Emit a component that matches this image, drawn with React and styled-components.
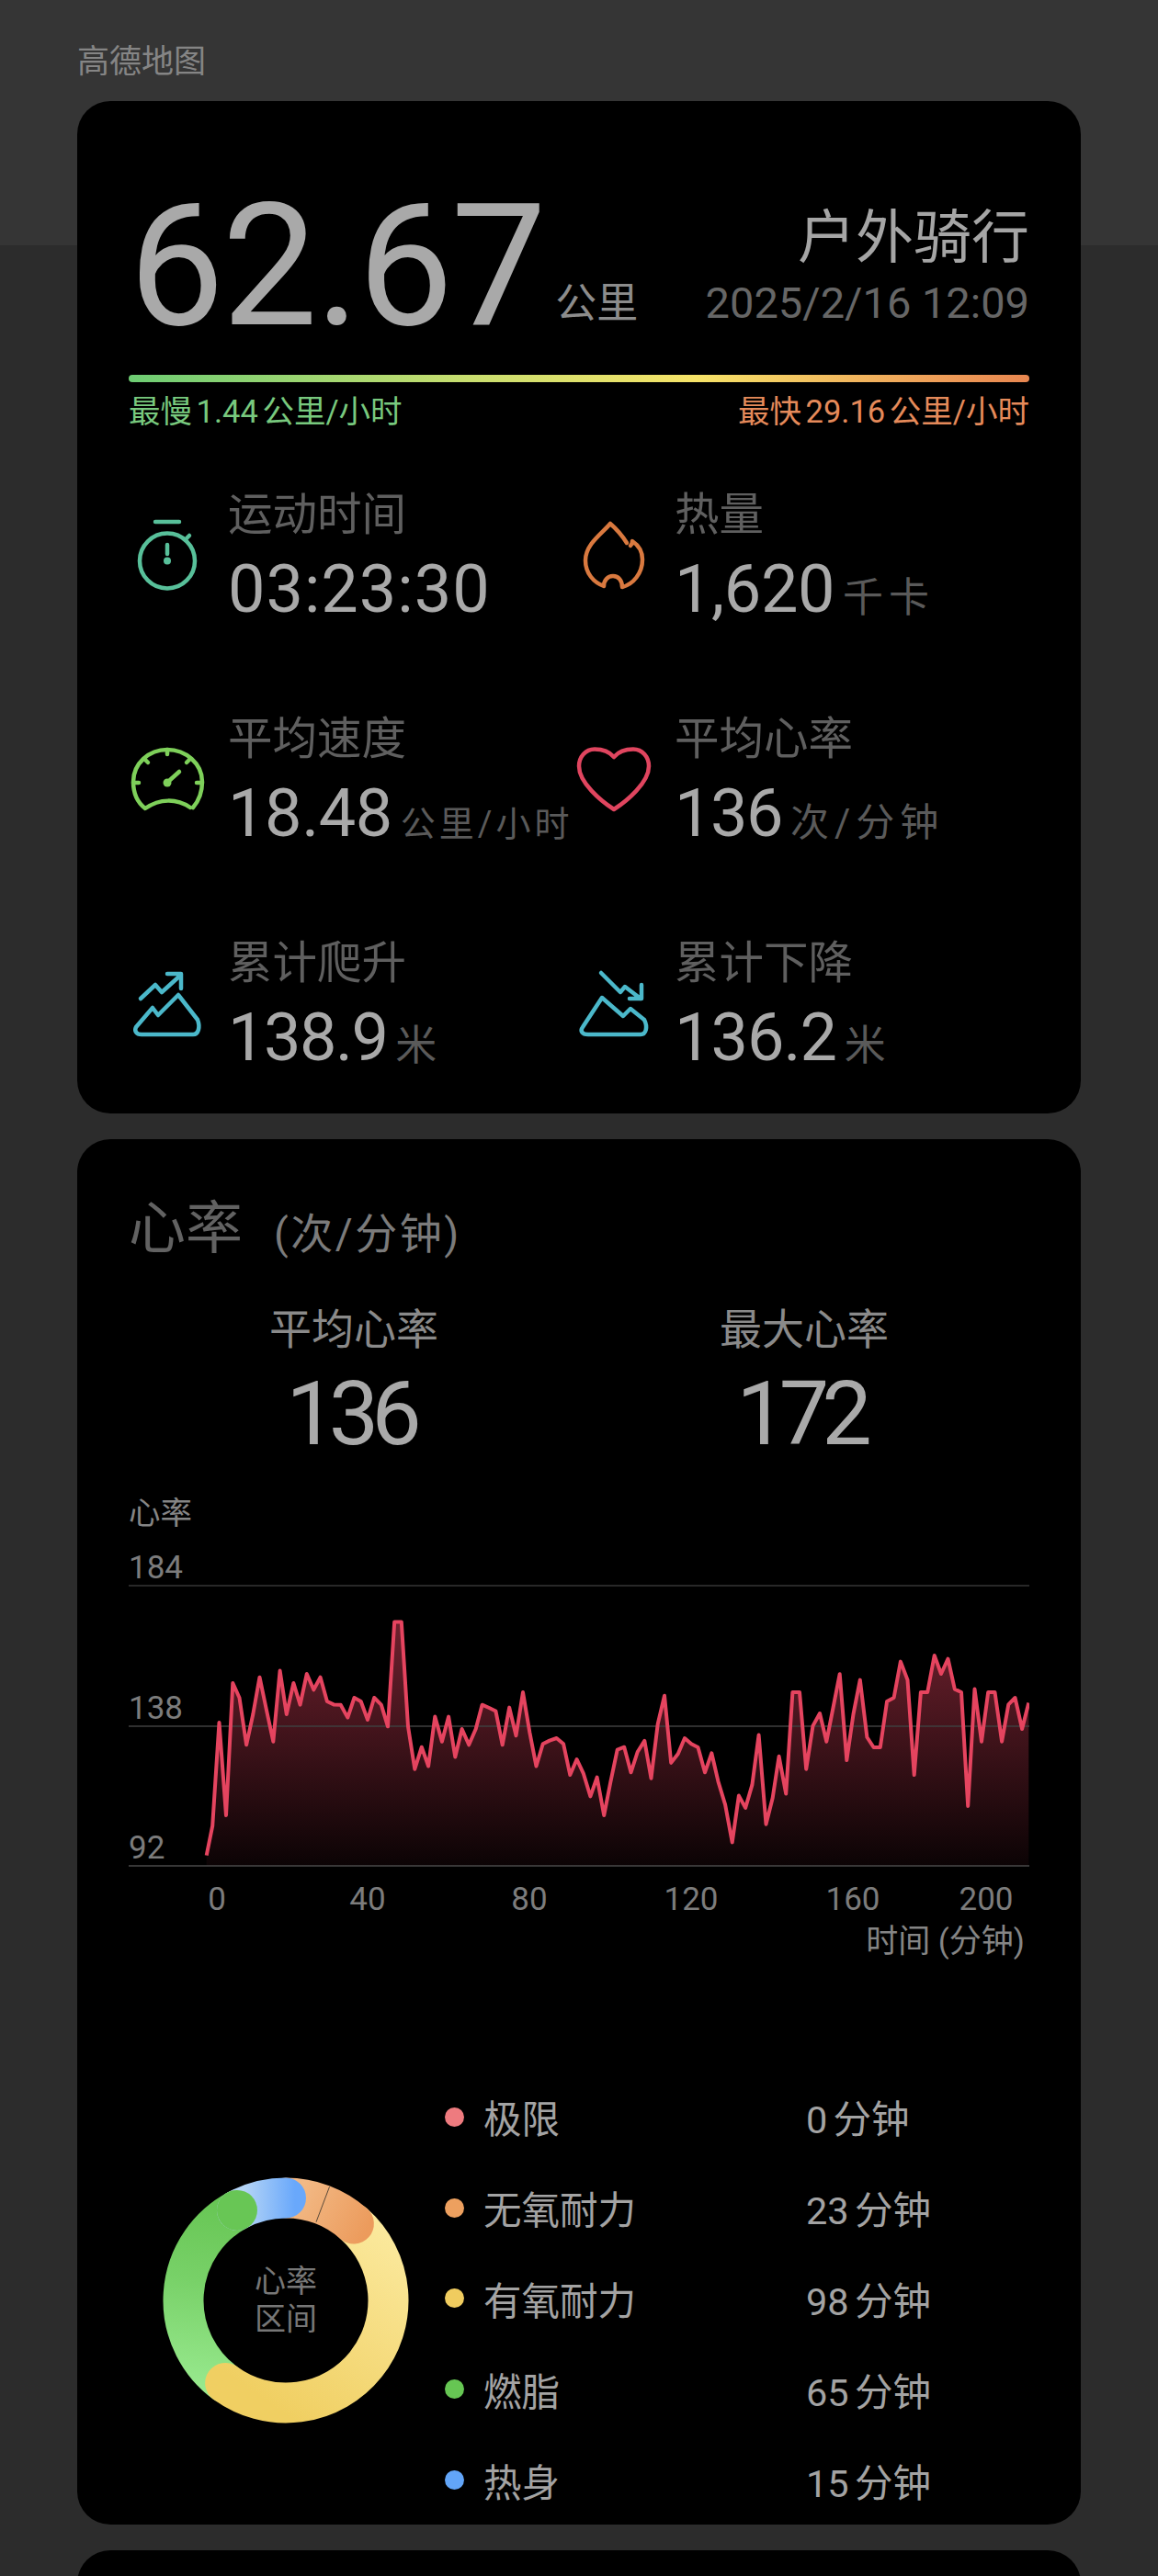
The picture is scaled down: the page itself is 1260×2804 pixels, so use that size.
import React from "react";
import styled, { createGlobalStyle } from "styled-components";

const sans = `Roboto, "Noto Sans CJK SC", sans-serif`;

const GlobalStyle = createGlobalStyle`
  html, body {
    margin: 0;
    padding: 0;
    height: 2804px;
    overflow: hidden;
    background: linear-gradient(#353535 267px, #2c2c2c 267px);
    font-family: ${sans};
  }
`;

const Page = styled.div`
  width: 1260px;
  height: 2804px;
  overflow: hidden;
  padding: 0 84px;
  box-sizing: border-box;
`;

const AppName = styled.div`
  height: 110px;
  padding-top: 47px;
  box-sizing: border-box;
  font-size: 35px;
  line-height: 42px;
  color: #858585;
`;

const Card = styled.section`
  background: #000;
  border-radius: 36px;
  padding: 0 56px;
  box-sizing: border-box;
  height: ${(props) => props.$height}px;
  margin-bottom: 28px;
`;

const SummaryRow = styled.div`
  display: flex;
  justify-content: space-between;
  padding-top: 101px;
  height: 251px;
  box-sizing: border-box;
`;

const Distance = styled.div`
  display: flex;
  align-items: flex-end;
`;

const BigNumber = styled.span`
  font-size: 185px;
  line-height: 150px;
  letter-spacing: -2.5px;
  color: #a9a9a9;
  margin-bottom: -4px;
`;

const BigUnit = styled.span`
  font-size: 45px;
  line-height: 50px;
  color: #8c8c8c;
  margin: 0 0 5px 12px;
`;

const Activity = styled.div`
  text-align: right;
`;

const ActivityName = styled.div`
  font-size: 63px;
  line-height: 72px;
  color: #a5a5a5;
  margin-top: 12px;
`;

const ActivityDate = styled.div`
  font-size: 47px;
  line-height: 54px;
  color: #666;
  margin-top: 8px;
`;

const SpeedBar = styled.div`
  height: 8px;
  border-radius: 4px;
  margin-top: 47px;
  background: linear-gradient(90deg, #6dcc73 0%, #c9de6f 38%, #f6e368 63%, #ee9d58 90%, #e78650 100%);
`;

const SpeedRange = styled.div`
  display: flex;
  justify-content: space-between;
  margin-top: 12px;
  font-size: 34.5px;
  line-height: 40px;
  word-spacing: -4px;
`;

const SpeedLabel = styled.span`
  color: ${(props) => props.$color};
`;

const StatGrid = styled.div`
  display: grid;
  grid-template-columns: 486px 1fr;
  row-gap: 106px;
  margin-top: 67px;
`;

const Stat = styled.div`
  display: flex;
  align-items: center;
`;

const StatIcon = styled.svg`
  width: 84px;
  height: 84px;
  flex: none;
  margin-right: 24px;
  fill: none;
  stroke: ${(props) => props.$color};
  stroke-width: 4.5;
  stroke-linecap: round;
  stroke-linejoin: round;
`;

const StatLabel = styled.div`
  font-size: 48.5px;
  line-height: 52px;
  color: #5f5f5f;
  white-space: nowrap;
`;

const StatValue = styled.div`
  display: flex;
  align-items: baseline;
  height: 62px;
  margin-top: 24px;
  font-size: 72px;
  line-height: 62px;
  letter-spacing: ${(props) => props.$tracking}px;
  color: #a9a9a9;
  white-space: nowrap;
`;

const StatUnit = styled.span`
  font-size: ${(props) => props.$size}px;
  letter-spacing: ${(props) => props.$spacing}px;
  line-height: 62px;
  color: #5a5a5a;
  margin-left: 9px;
`;

const HeartHead = styled.div`
  display: flex;
  align-items: baseline;
  padding-top: 63px;
`;

const HeartTitle = styled.span`
  font-size: 62px;
  line-height: 70px;
  color: #626262;
`;

const HeartUnit = styled.span`
  font-size: 46px;
  letter-spacing: 2.5px;
  color: #7b7b7b;
  margin-left: 34px;
`;

const PeakGrid = styled.div`
  display: grid;
  grid-template-columns: 1fr 1fr;
  margin-top: 47px;
  text-align: center;
`;

const PeakLabel = styled.div`
  font-size: 46px;
  line-height: 54px;
  color: #8a8a8a;
`;

const PeakValue = styled.div`
  font-size: 97px;
  line-height: 90px;
  letter-spacing: -8px;
  color: #a9a9a9;
  margin: 20px 0 0 -8px;
`;

const AxisName = styled.div`
  margin-top: 43px;
  font-size: 34.5px;
  line-height: 40px;
  color: #858585;
`;

const ChartSvg = styled.svg`
  display: block;
  width: 980px;
  height: 456px;
  margin-top: 19px;
  font-family: ${sans};
`;

const AxisTitle = styled.div`
  text-align: right;
  font-size: 35px;
  line-height: 40px;
  color: #858585;
  padding-right: 5px;
  margin-top: -48px;
`;

const ZoneRow = styled.div`
  display: flex;
  align-items: center;
  margin-top: 121px;
`;

const DonutWrap = styled.div`
  position: relative;
  width: 268px;
  height: 268px;
  flex: none;
  margin: 4px 39px 0 37px;
`;

const DonutLabel = styled.div`
  position: absolute;
  inset: 0;
  display: flex;
  align-items: center;
  justify-content: center;
  text-align: center;
  font-size: 34px;
  line-height: 41px;
  color: #777;
`;

const ZoneList = styled.div`
  flex: 1;
`;

const Zone = styled.div`
  display: grid;
  grid-template-columns: 21px 351px 1fr;
  column-gap: 21px;
  align-items: center;
  height: 98.8px;
  font-size: 41.5px;
  word-spacing: -4px;
  color: #a3a3a3;
`;

const ZoneDot = styled.i`
  width: 21px;
  height: 21px;
  border-radius: 50%;
  background: ${(props) => props.$color};
`;

const ZoneTime = styled.span`
  margin-left: -21px;
`;

const StopwatchIcon = () => (
  <StatIcon $color="#58c09a" viewBox="0 0 84 84">
    <circle cx="42" cy="48.5" r="30" />
    <path d="M29 6h26M63 24l3-3M42 31v10" />
    <circle cx="42" cy="48.5" r="4" fill="#58c09a" stroke="none" />
  </StatIcon>
);

const FlameIcon = () => (
  <StatIcon $color="#d9793f" viewBox="0 0 84 84">
    <path d="M56 29C51 21 45 14 38 8C30 18 11 30 11 48C11 62 20 72 31 76C31 70 35 65 41 65C47 65 51 70 51 77C63 74 73 62 73 47C73 38 68 31 62 27C62 30 61 31 60 32" />
  </StatIcon>
);

const SpeedIcon = () => (
  <StatIcon $color="#7ed05a" viewBox="0 0 84 84">
    <path d="M70 73C76 66 80 56 80 45C80 25 62 10 42 10C22 10 5 25 5 45C5 56 9 67 18 74C34 63 52 63 67 73" />
    <path d="M42 10v5M17 20l4 4M67 20l-4 4M5 46h6M80 46h-6" />
    <path d="M45 43L55 34" />
    <circle cx="42" cy="46" r="4.5" fill="#7ed05a" stroke="none" />
  </StatIcon>
);

const HeartIcon = () => (
  <StatIcon $color="#e0455f" viewBox="0 0 84 84">
    <path d="M42 18C36 11 28 9.5 21 9.5C11 9.5 4 18 4 28C4 46 28 66 42 75C56 66 80 46 80 28C80 18 73 9.5 63 9.5C56 9.5 48 11 42 18Z" />
  </StatIcon>
);

const ClimbIcon = () => (
  <StatIcon $color="#4bb8ca" viewBox="0 0 84 84">
    <path d="M13 37L29 22L36 30L56 12M42 10H57V26" />
    <path d="M8 68L26 47L32 55L54 33L75 60C78 68 76 76 70 76H14C8 76 6 72 8 68Z" />
  </StatIcon>
);

const DescentIcon = () => (
  <StatIcon $color="#4bb8ca" viewBox="0 0 84 84">
    <path d="M28 9L49 30L54 24L71 37M72 22V37H59" />
    <path d="M8 68L29 36L52 56L60 48L75 60C79 68 77 76 71 76H14C7 76 5 72 8 68Z" />
  </StatIcon>
);

const stats = [
  { label: "运动时间", value: "03:23:30", tracking: 1, Icon: StopwatchIcon },
  { label: "热量", value: "1,620", tracking: -0.4, unit: "千卡", size: 44, spacing: 6, Icon: FlameIcon },
  { label: "平均速度", value: "18.48", tracking: -0.4, unit: "公里/小时", size: 38, spacing: 4, Icon: SpeedIcon },
  { label: "平均心率", value: "136", tracking: -1.5, unit: "次/分钟", size: 42, spacing: 6, Icon: HeartIcon },
  { label: "累计爬升", value: "138.9", tracking: -1.5, unit: "米", size: 45, spacing: 0, Icon: ClimbIcon },
  { label: "累计下降", value: "136.2", tracking: -1, unit: "米", size: 45, spacing: 0, Icon: DescentIcon },
];

// traced off the reference, x in page px, y in px below the top grid line
const trace = [
  [224.7, 293.6], [231.2, 261.5], [238.5, 149], [246.0, 250], [253.3, 106], [260.5, 122], [268.1, 173.3], [275.3, 140], [282.5, 99.7], [289.8, 134.7], [297.3, 169.7], [304.6, 92.6], [311.8, 140], [319.4, 106], [326.6, 129.7], [333.8, 96], [341.3, 113.3], [348.6, 99.7], [355.9, 126], [363.1, 129.4], [370.7, 129.7], [378.3, 143.6], [385.5, 122], [392.7, 126], [400.0, 146], [407.2, 122], [414.8, 129.7], [422.0, 153.3], [429.2, 39.4], [436.8, 39.4], [444.0, 153.3], [451.3, 199.7], [458.8, 175.7], [466.1, 196.5], [473.3, 142.6], [480.9, 169.7], [488.1, 142.6], [495.3, 186.5], [502.6, 156], [510.2, 173.3], [517.7, 156], [524.6, 129.7], [532.2, 133], [539.4, 136.5], [546.7, 173.3], [554.2, 132.6], [561.5, 163.3], [569.0, 116], [576.3, 159.7], [583.5, 196.5], [590.7, 172.3], [598.0, 168.6], [605.6, 166], [613.1, 172.3], [620.3, 206], [627.6, 189], [634.8, 204.4], [642.4, 229.4], [649.6, 208.6], [657.2, 250],
  [664.4, 213.3], [671.7, 178.6], [679.2, 175.7], [686.5, 203.3], [693.7, 181], [701.3, 168.9], [708.5, 209.7], [715.7, 150.7], [723.0, 119.7], [730.2, 192.9], [737.8, 183], [745.0, 166], [752.2, 172.3], [759.5, 176], [767.0, 203.3], [774.3, 182.3], [781.5, 213.3], [789.1, 238.3], [796.7, 279.4], [803.9, 228.6], [811.1, 241.9], [818.4, 216.9], [825.6, 162.6], [833.5, 259.7], [840.7, 231], [847.6, 185.8], [855.2, 226.5], [862.4, 116], [870.0, 116], [877.2, 199.7], [884.5, 152.6], [892.0, 139], [899.3, 169.7], [906.5, 133], [913.7, 96.2], [921.3, 190], [928.5, 140], [935.8, 102.6], [943.4, 165], [950.6, 176], [957.8, 176], [965.1, 126], [972.6, 122], [979.9, 82.6], [987.5, 102.6], [994.7, 206], [1001.9, 116], [1009.2, 116], [1016.7, 76], [1024.0, 96], [1031.5, 79.7], [1038.8, 112.6], [1046.0, 116], [1053.2, 240], [1060.5, 112.6], [1068.0, 169.7], [1075.2, 116], [1082.5, 116], [1090.1, 169.7], [1097.3, 129.4], [1104.5, 122], [1112.1, 156], [1119.3, 127.6],
];

const chartTop = 40;
const chartX = (x) => x - 140;
const chartY = (y) => y + chartTop;
const chartBase = chartTop + 305;
const linePoints = trace.map(([x, y]) => `${chartX(x)},${chartY(y)}`).join(" ");
const areaPoints = `${chartX(trace[0][0])},${chartBase} ${linePoints} ${chartX(1119.3)},${chartBase}`;

const gridLines = [
  { value: "184", y: chartTop, color: "#363636" },
  { value: "138", y: chartTop + 153, color: "#3f3f3f" },
  { value: "92", y: chartBase, color: "#4a4a4a" },
];

const xTicks = [
  { label: "0", x: 96 },
  { label: "40", x: 260 },
  { label: "80", x: 436 },
  { label: "120", x: 612 },
  { label: "160", x: 788 },
  { label: "200", x: 933 },
];

const HeartChart = () => (
  <ChartSvg viewBox="0 0 980 456">
    <defs>
      <linearGradient id="heartFill" x1="0" y1={chartTop + 30} x2="0" y2={chartBase} gradientUnits="userSpaceOnUse">
        <stop offset="0" stopColor="#e5445f" stopOpacity="0.5" />
        <stop offset="1" stopColor="#e5445f" stopOpacity="0.05" />
      </linearGradient>
    </defs>
    <polygon points={areaPoints} fill="url(#heartFill)" />
    {gridLines.map((line) => (
      <g key={line.value}>
        <line x1="0" x2="980" y1={line.y} y2={line.y} stroke={line.color} strokeWidth="1.5" />
        <text x="0" y={line.y - 8} fontSize="35" fill="#7c7c7c">{line.value}</text>
      </g>
    ))}
    <polyline points={linePoints} fill="none" stroke="#e5445f" strokeWidth="4" strokeLinejoin="round" />
    {xTicks.map((tick) => (
      <text key={tick.label} x={tick.x} y={chartBase + 48} fontSize="35" fill="#7c7c7c" textAnchor="middle">{tick.label}</text>
    ))}
  </ChartSvg>
);

const polar = (angle) => {
  const rad = ((angle - 90) * Math.PI) / 180;
  return [111.5 * Math.cos(rad), 111.5 * Math.sin(rad)];
};

const arc = (from, to) => {
  const [x1, y1] = polar(from);
  const [x2, y2] = polar(to);
  return `M${x1} ${y1}A111.5 111.5 0 ${to - from > 180 ? 1 : 0} 1 ${x2} ${y2}`;
};

const Donut = () => {
  const [gx, gy] = polar(331.6);
  return (
    <svg width="268" height="268" viewBox="-134 -134 268 268" fill="none" strokeWidth="44" strokeLinecap="round">
      <defs>
        <linearGradient id="greenArc" x1="-70" y1="100" x2="-40" y2="-110" gradientUnits="userSpaceOnUse">
          <stop offset="0" stopColor="#98e98e" />
          <stop offset="0.55" stopColor="#78d168" />
          <stop offset="1" stopColor="#66c553" />
        </linearGradient>
        <linearGradient id="yellowArc" x1="110" y1="-80" x2="-20" y2="110" gradientUnits="userSpaceOnUse">
          <stop offset="0" stopColor="#fbe99d" />
          <stop offset="1" stopColor="#f0cf62" />
        </linearGradient>
        <linearGradient id="orangeArc" x1="10" y1="-110" x2="85" y2="-70" gradientUnits="userSpaceOnUse">
          <stop offset="0" stopColor="#f2b985" />
          <stop offset="1" stopColor="#ec9b5c" />
        </linearGradient>
        <linearGradient id="blueArc" x1="-45" y1="-110" x2="10" y2="-110" gradientUnits="userSpaceOnUse">
          <stop offset="0" stopColor="#b4d4f6" />
          <stop offset="1" stopColor="#69a8fb" />
        </linearGradient>
      </defs>
      <path d={arc(216.2, 331.6)} stroke="url(#greenArc)" />
      <path d={arc(41.5, 216.2)} stroke="url(#yellowArc)" />
      <path d={arc(0, 41.5)} stroke="url(#orangeArc)" />
      <line x1="47.5" y1="-123.7" x2="33" y2="-85.3" stroke="#5a4a3a" strokeWidth="1" strokeLinecap="butt" />
      <path d={arc(331.6, 360)} stroke="url(#blueArc)" />
      <circle cx={gx} cy={gy} r="22" fill="#68c655" />
    </svg>
  );
};

const zones = [
  { name: "极限", time: "0 分钟", color: "#ee7b7f" },
  { name: "无氧耐力", time: "23 分钟", color: "#eda05f" },
  { name: "有氧耐力", time: "98 分钟", color: "#f0cc5f" },
  { name: "燃脂", time: "65 分钟", color: "#66c653" },
  { name: "热身", time: "15 分钟", color: "#62a5f8" },
];

const App = () => {
  return (
    <Page>
      <GlobalStyle />
      <AppName>高德地图</AppName>
      <Card $height={1102}>
        <SummaryRow>
          <Distance>
            <BigNumber>62.67</BigNumber>
            <BigUnit>公里</BigUnit>
          </Distance>
          <Activity>
            <ActivityName>户外骑行</ActivityName>
            <ActivityDate>2025/2/16 12:09</ActivityDate>
          </Activity>
        </SummaryRow>
        <SpeedBar />
        <SpeedRange>
          <SpeedLabel $color="#78c97e">最慢 1.44 公里/小时</SpeedLabel>
          <SpeedLabel $color="#e58a5a">最快 29.16 公里/小时</SpeedLabel>
        </SpeedRange>
        <StatGrid>
          {stats.map(({ label, value, tracking, unit, size, spacing, Icon }) => (
            <Stat key={label}>
              <Icon />
              <div>
                <StatLabel>{label}</StatLabel>
                <StatValue $tracking={tracking}>
                  {value}
                  {unit && <StatUnit $size={size} $spacing={spacing}>{unit}</StatUnit>}
                </StatValue>
              </div>
            </Stat>
          ))}
        </StatGrid>
      </Card>
      <Card $height={1508}>
        <HeartHead>
          <HeartTitle>心率</HeartTitle>
          <HeartUnit>(次/分钟)</HeartUnit>
        </HeartHead>
        <PeakGrid>
          <div>
            <PeakLabel>平均心率</PeakLabel>
            <PeakValue>136</PeakValue>
          </div>
          <div>
            <PeakLabel>最大心率</PeakLabel>
            <PeakValue>172</PeakValue>
          </div>
        </PeakGrid>
        <AxisName>心率</AxisName>
        <HeartChart />
        <AxisTitle>时间 (分钟)</AxisTitle>
        <ZoneRow>
          <DonutWrap>
            <Donut />
            <DonutLabel>心率<br />区间</DonutLabel>
          </DonutWrap>
          <ZoneList>
            {zones.map((zone) => (
              <Zone key={zone.name}>
                <ZoneDot $color={zone.color} />
                <span>{zone.name}</span>
                <ZoneTime>{zone.time}</ZoneTime>
              </Zone>
            ))}
          </ZoneList>
        </ZoneRow>
      </Card>
      <Card $height={100} />
    </Page>
  );
};

export default App;
